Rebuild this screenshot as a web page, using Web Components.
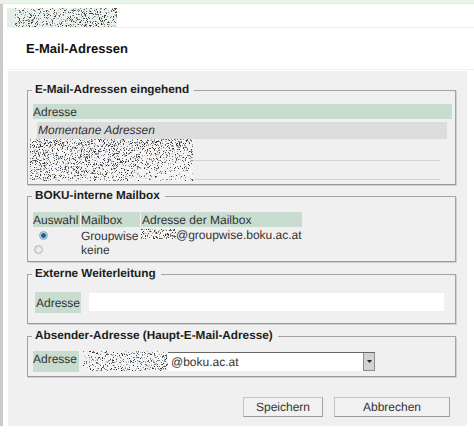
<!DOCTYPE html>
<html lang="de">
<head>
<meta charset="utf-8">
<title>E-Mail-Adressen</title>
<style>
  html, body { margin: 0; background: #fff; }
  body { font: 12px/15px "Liberation Sans", Arial, sans-serif; color: #333; overflow: hidden; text-rendering: geometricPrecision; }
</style>
</head>
<body>
<email-page></email-page>
<script>
// pixel noise standing in for the blurred out parts of the screenshot
class NoisePatch extends HTMLElement {
  constructor() {
    super();
    this.attachShadow({ mode: 'open' }).innerHTML = `
      <style>
        :host { display: block; flex: none; }
        canvas { display: block; filter: blur(.5px); }
      </style>
      <canvas></canvas>`;
  }
  connectedCallback() {
    const w = +this.getAttribute('w'), h = +this.getAttribute('h');
    const density = +(this.getAttribute('density') || .3);
    const fade = this.hasAttribute('fade');
    const c = this.shadowRoot.querySelector('canvas');
    c.width = w; c.height = h;
    c.style.width = w + 'px'; c.style.height = h + 'px';
    const ctx = c.getContext('2d');
    let seed = w * 31 + h * 17;
    const rnd = () => (seed = (seed * 16807) % 2147483647) / 2147483647;
    const colors = ['#3a3a3a', '#555', '#6f7f8f', '#8a8a8a', '#7c6a58', '#a9b8c8', '#2c3440', '#b5a897'];
    for (let y = 0; y < h; y++) {
      for (let x = 0; x < w; x++) {
        const limit = fade ? density * (1 - .8 * (y / h) * (x / w)) : density;
        if (rnd() < limit) {
          ctx.fillStyle = colors[Math.floor(rnd() * colors.length)];
          ctx.fillRect(x, y, 1, 1);
        } else if (rnd() < .3) {
          ctx.fillStyle = '#fbfbfb';
          ctx.fillRect(x, y, 1, 1);
        }
      }
    }
  }
}

class MailGroup extends HTMLElement {
  constructor() {
    super();
    this.attachShadow({ mode: 'open' }).innerHTML = `
      <style>
        :host { display: block; }
        fieldset {
          margin: 0; padding: 0 0 0 5px; min-width: 0;
          border: 1px solid #a3a3a3; border-bottom-color: #9a9a9a;
          box-shadow: 1px 1px 0 #d0d0d0;
        }
        legend {
          margin-left: -1px; padding: 0 5px 0 3px;
          font-weight: bold; font-size: 11.75px; line-height: 14px; color: #1c1c1c;
        }
      </style>
      <fieldset>
        <legend></legend>
        <slot></slot>
      </fieldset>`;
  }
  connectedCallback() {
    this.shadowRoot.querySelector('legend').textContent = this.getAttribute('legend');
  }
}

class RadioDot extends HTMLElement {
  constructor() {
    super();
    this.attachShadow({ mode: 'open' }).innerHTML = `
      <style>
        :host {
          display: block; width: 9px; height: 9px; border-radius: 50%;
          border: 1px solid #b4b8bc; box-sizing: border-box;
          background: radial-gradient(circle at 60% 60%, #f4f4f4, #d4d4d4);
        }
        :host([checked]) {
          border-color: #8fa6bb;
          background: radial-gradient(circle, #1f5f99 0 2px, #a9c6de 2.6px, #eef3f7 100%);
        }
      </style>`;
  }
}

class SelectBox extends HTMLElement {
  constructor() {
    super();
    this.attachShadow({ mode: 'open' }).innerHTML = `
      <style>
        :host {
          display: flex; box-sizing: border-box; width: 207px; height: 19px;
          background: #fff; border-top: 1px solid #666;
        }
        .value { flex: 1; padding-left: 3px; line-height: 19px; white-space: nowrap; }
        .arrow {
          width: 12px; display: flex; align-items: center; justify-content: center;
          background: #d2d2d2; border: 1px solid #8c8c8c; border-top: 0; box-sizing: border-box;
        }
        svg { display: block; }
      </style>
      <div class="value"><slot></slot></div>
      <div class="arrow"><svg width="5" height="3" viewBox="0 0 5 3"><path d="M0 0h5L2.5 3z" fill="#222"/></svg></div>`;
  }
}

class PlainButton extends HTMLElement {
  constructor() {
    super();
    this.attachShadow({ mode: 'open' }).innerHTML = `
      <style>
        :host {
          display: block; box-sizing: border-box; height: 20px; text-align: center;
          line-height: 18px; background: #f1f1f1; color: #333;
          border: 1px solid #c4c4c4; border-right-color: #a2a2a2; border-bottom-color: #999;
        }
      </style>
      <slot></slot>`;
  }
}

class EmailPage extends HTMLElement {
  constructor() {
    super();
    this.attachShadow({ mode: 'open' }).innerHTML = `
      <style>
        :host { display: block; width: 474px; height: 435px; overflow: hidden; }
        .topline { height: 3px; background: #eaf5ea; border-bottom: 1px solid #e4e8e4; }
        .main { display: flex; height: 422px; }
        .rail { width: 3px; background: #cbcbcb; flex: none; }
        .content { flex: 1; padding-left: 4px; min-width: 0; }
        .brand { height: 19px; margin-top: 4px; width: 110px; background: #e2eee6; }
        .brand noise-patch { margin-left: 8px; }
        .titlebar { height: 41px; border-top: 1px solid #f0f0f0; border-bottom: 1px solid #f0f0f0; }
        h1 { margin: 0; padding: 13px 0 0 19px; font-size: 13px; line-height: 15px; color: #111; font-weight: bold; }
        .panel {
          margin: 1px 0 0 1px; width: 459px; height: 355px; box-sizing: border-box;
          padding: 12px 11px 0 19px; background: #f0f0f0; border-radius: 0 0 4px 0;
        }
        mail-group { margin-bottom: 4px; }
        .head { background: #c8dccf; height: 15px; line-height: 17px; }

        .g1 .head { width: 419px; margin: 7px 0 0 0; }
        .current { margin: 3px 0 0 4px; width: 410px; height: 17px; line-height: 17px; background: #dcdcdc; font-style: italic; padding-left: 1px; box-sizing: border-box; }
        .hidden-rows { display: flex; margin-left: -3px; height: 45px; }
        .lines { width: 247px; display: flex; flex-direction: column; }
        .lines i { display: block; height: 1px; background: #d6d6d6; }
        .lines i:first-child { margin-top: 21px; }
        .lines i:last-child { margin-top: 18px; }

        .g2 { margin-bottom: 5px; }
        .mailbox { display: grid; grid-template-columns: 47px 60px 162px; margin-top: 7px; padding-bottom: 6px; width: 269px; }
        .mailbox .head { margin-top: 2px; }
        .mailbox .head + .head { margin-left: 1px; }
        .mailbox .head:nth-child(3) { margin-left: 1px; padding-left: 1px; }
        .cell { height: 14px; line-height: 18px; white-space: nowrap; }
        .cell.pick { display: flex; align-items: center; padding-left: 6px; padding-top: 3px; height: 11px; }
        .cell.addr { display: flex; align-items: center; padding-top: 2px; height: 12px; }
        .cell.addr noise-patch { margin-right: 0; margin-top: -2px; }
        .cell + .cell { padding-left: 1px; }

        .row { display: flex; }
        .g3 { margin-bottom: 5px; }
        .g3 .row { padding: 11px 0 10px 2px; }
        .g3 .label { width: 46px; height: 21px; line-height: 23px; background: #c8dccf; padding-left: 1px; box-sizing: border-box; }
        .input { margin: 1px 0 0 8px; width: 355px; height: 18px; background: #fff; }
        .g4 .row { padding: 8px 0 4px 0; }
        .g4 .label { width: 46px; height: 21px; line-height: 17px; background: #c8dccf; }
        .g4 noise-patch { margin-left: 4px; }
        .g4 select-box { margin-top: 1px; }

        .buttons { display: flex; margin-top: 20px; }
        .buttons plain-button:first-child { width: 80px; margin-left: 216px; }
        .buttons plain-button:last-child { width: 116px; margin-left: 11px; }
      </style>
      <div class="topline"></div>
      <div class="main">
        <div class="rail"></div>
        <div class="content">
          <div class="brand"><noise-patch w="102" h="19" density=".24"></noise-patch></div>
          <div class="titlebar"><h1>E-Mail-Adressen</h1></div>
          <div class="panel">
            <mail-group class="g1" legend="E-Mail-Adressen eingehend">
              <div class="head">Adresse</div>
              <div class="current">Momentane Adressen</div>
              <div class="hidden-rows">
                <noise-patch w="163" h="42" density=".3" fade></noise-patch>
                <div class="lines"><i></i><i></i></div>
              </div>
            </mail-group>
            <mail-group class="g2" legend="BOKU-interne Mailbox">
              <div class="mailbox">
                <div class="head">Auswahl</div>
                <div class="head">Mailbox</div>
                <div class="head">Adresse der Mailbox</div>
                <div class="cell pick"><radio-dot checked></radio-dot></div>
                <div class="cell">Groupwise</div>
                <div class="cell addr"><noise-patch w="35" h="10" density=".3"></noise-patch>@groupwise.boku.ac.at</div>
                <div class="cell pick"><radio-dot></radio-dot></div>
                <div class="cell">keine</div>
                <div class="cell"></div>
              </div>
            </mail-group>
            <mail-group class="g3" legend="Externe Weiterleitung">
              <div class="row">
                <div class="label">Adresse</div>
                <div class="input"></div>
              </div>
            </mail-group>
            <mail-group class="g4" legend="Absender-Adresse (Haupt-E-Mail-Adresse)">
              <div class="row">
                <div class="label">Adresse</div>
                <noise-patch w="85" h="20" density=".2"></noise-patch>
                <select-box>@boku.ac.at</select-box>
              </div>
            </mail-group>
            <div class="buttons">
              <plain-button>Speichern</plain-button>
              <plain-button>Abbrechen</plain-button>
            </div>
          </div>
        </div>
      </div>`;
  }
}

customElements.define('noise-patch', NoisePatch);
customElements.define('mail-group', MailGroup);
customElements.define('radio-dot', RadioDot);
customElements.define('select-box', SelectBox);
customElements.define('plain-button', PlainButton);
customElements.define('email-page', EmailPage);
</script>
</body>
</html>
